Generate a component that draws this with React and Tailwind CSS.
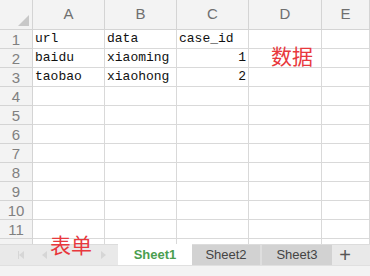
import React from "react";

const cols = ["A", "B", "C", "D", "E"];
const rows = [
  ["url", "data", "case_id", "", ""],
  ["baidu", "xiaoming", "1", "", ""],
  ["taobao", "xiaohong", "2", "", ""],
];

export default function App() {
  const all = Array.from({ length: 12 }, (_, i) => rows[i] || ["", "", "", "", ""]);

  return (
    <div className="relative w-[370px] h-[276px] overflow-hidden bg-white font-['Liberation_Sans',sans-serif]">
      {/* column headers */}
      <div className="grid grid-cols-[33px_72px_72px_72px_73px_1fr] h-[30px] bg-[#f3f3f3]">
        <div className="relative border-r border-b border-[#d4d4d4]">
          <div className="absolute right-[3px] bottom-[3px] w-0 h-0 border-l-[11px] border-l-transparent border-b-[11px] border-b-[#c8c8c8]" />
        </div>
        {cols.map((c) => (
          <div
            key={c}
            className="flex items-center justify-center border-r border-b border-[#d4d4d4] text-[15px] text-[#6f6f6f]"
          >
            {c}
          </div>
        ))}
      </div>

      {/* rows */}
      {all.map((r, i) => (
        <div key={i} className="grid grid-cols-[33px_72px_72px_72px_73px_1fr] h-[19px]">
          <div className="flex items-center justify-center bg-[#f3f3f3] border-r border-b border-[#d4d4d4] text-[15px] leading-none text-[#808080]">
            {i + 1}
          </div>
          {r.map((v, j) => (
            <div
              key={j}
              className={`flex items-end pb-[1px] px-[2px] border-r border-b border-[#d9d9d9] font-['Liberation_Mono',monospace] text-[13px] leading-[16px] text-[#111] ${
                j === 2 && /^\d+$/.test(v) ? "justify-end" : "justify-start"
              }`}
            >
              {v}
            </div>
          ))}
        </div>
      ))}

      {/* sheet tabs */}
      <div className="absolute left-0 right-0 top-[244px] h-[21px] flex bg-[#e9e9e9] border-t border-[#dcdcdc]">
        <div className="w-[118px] flex items-center gap-[18px] pl-[18px]">
          <div className="flex items-center">
            <div className="w-px h-[8px] bg-[#d6d6d6]" />
            <div className="w-0 h-0 border-y-[4px] border-y-transparent border-r-[5px] border-r-[#d6d6d6]" />
          </div>
          <div className="w-0 h-0 border-y-[4px] border-y-transparent border-r-[5px] border-r-[#d6d6d6]" />
          <div className="ml-[36px] w-0 h-0 border-y-[4px] border-y-transparent border-l-[5px] border-l-[#d6d6d6]" />
        </div>
        <div className="w-[74px] -mt-px bg-white flex items-center justify-center text-[13px] font-bold text-[#4a9e4f]">
          Sheet1
        </div>
        <div className="w-[70px] bg-[#d2d2d2] border-r-2 border-[#dedede] flex items-center justify-center text-[13px] text-[#444]">
          Sheet2
        </div>
        <div className="w-[70px] bg-[#d2d2d2] flex items-center justify-center text-[13px] text-[#444]">
          Sheet3
        </div>
        <div className="w-[26px] flex items-center justify-center text-[20px] font-light text-[#555]">
          +
        </div>
      </div>

      {/* status strip */}
      <div className="absolute left-0 right-0 top-[265px] h-[11px] bg-[#f3f3f3] border-t border-[#e0e0e0]" />

      {/* annotations */}
      <div className="absolute left-[271px] top-[45px] text-[21px] leading-none text-[#e8383d] font-['Noto_Sans_CJK_SC',sans-serif]">
        数据
      </div>
      <div className="absolute left-[50px] top-[234px] text-[21px] leading-none text-[#e8383d] font-['Noto_Sans_CJK_SC',sans-serif]">
        表单
      </div>
    </div>
  );
}
